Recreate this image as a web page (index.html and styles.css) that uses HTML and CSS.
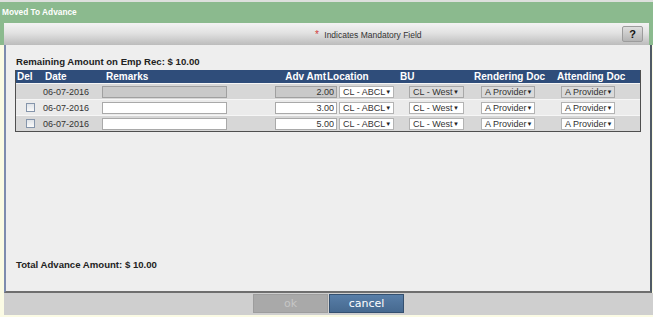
FILE: index.html
```html
<!DOCTYPE html>
<html lang="en">
<head>
    <meta charset="UTF-8">
    <meta name="viewport" content="width=device-width, initial-scale=1.0">
    <title>Moved To Advance</title>
    <link rel="stylesheet" href="styles.css">
</head>
<body>
    <div class="dialog">
        <div class="titlebar">Moved To Advance</div>

        <div class="toolbar-frame">
            <div class="toolbar">
                <span class="note"><span class="req">*</span> Indicates Mandatory Field</span>
                <button class="help">?</button>
            </div>
        </div>

        <div class="content">
            <div class="summary">Remaining Amount on Emp Rec: $ 10.00</div>

            <div class="grid">
                <div class="grid-head">
                    <div>Del</div>
                    <div>Date</div>
                    <div>Remarks</div>
                    <div>Adv Amt</div>
                    <div>Location</div>
                    <div>BU</div>
                    <div>Rendering Doc</div>
                    <div>Attending Doc</div>
                </div>

                <div class="grid-row dark locked">
                    <div></div>
                    <div class="date">06-07-2016</div>
                    <div><input class="remarks" type="text" disabled></div>
                    <div><input class="amt" type="text" value="2.00" disabled></div>
                    <div><span class="select loc">CL - ABCL<i>▼</i></span></div>
                    <div><span class="select bu off">CL - West<i>▼</i></span></div>
                    <div><span class="select doc off">A Provider<i>▼</i></span></div>
                    <div><span class="select doc off">A Provider<i>▼</i></span></div>
                </div>

                <div class="grid-row light">
                    <div><input class="del" type="checkbox"></div>
                    <div class="date">06-07-2016</div>
                    <div><input class="remarks" type="text"></div>
                    <div><input class="amt" type="text" value="3.00"></div>
                    <div><span class="select loc">CL - ABCL<i>▼</i></span></div>
                    <div><span class="select bu">CL - West<i>▼</i></span></div>
                    <div><span class="select doc">A Provider<i>▼</i></span></div>
                    <div><span class="select doc">A Provider<i>▼</i></span></div>
                </div>

                <div class="grid-row dark">
                    <div><input class="del" type="checkbox"></div>
                    <div class="date">06-07-2016</div>
                    <div><input class="remarks" type="text"></div>
                    <div><input class="amt" type="text" value="5.00"></div>
                    <div><span class="select loc">CL - ABCL<i>▼</i></span></div>
                    <div><span class="select bu">CL - West<i>▼</i></span></div>
                    <div><span class="select doc">A Provider<i>▼</i></span></div>
                    <div><span class="select doc">A Provider<i>▼</i></span></div>
                </div>
            </div>

            <div class="total">Total Advance Amount: $ 10.00</div>
        </div>

        <div class="footer">
            <button class="btn ok" disabled>ok</button>
            <button class="btn cancel">cancel</button>
        </div>
    </div>
</body>
</html>
```

FILE: styles.css
```css
body {
    margin: 0;
    padding: 0;
    background-color: #fbfbe4;
    font-family: "Liberation Sans", Arial, sans-serif;
    color: #333;
}
.dialog {
    width: 653px;
    height: 317px;
    overflow: hidden;
}
.titlebar {
    height: 21px;
    border-top: 2px solid #dde0dd;
    background-color: #8bba8e;
    color: white;
    font-weight: bold;
    font-size: 8.3px;
    line-height: 21px;
    padding-left: 2px;
}
.toolbar-frame {
    background-color: #8bba8e;
    padding: 0 4px;
}
.toolbar {
    height: 22px;
    display: flex;
    align-items: center;
    background: linear-gradient(#f3f3f3, #e2e2e2 45%, #bcbcbc);
}
.note {
    margin-left: 311px;
    font-size: 8.5px;
    color: #333;
}
.req {
    color: #d23b3b;
    font-size: 10px;
    margin-right: 3px;
}
.help {
    margin-left: auto;
    margin-right: 6px;
    width: 21px;
    height: 16px;
    padding: 0;
    border: 1px solid #9c9c9c;
    border-radius: 2px;
    background: linear-gradient(#dedede, #b4b4b4);
    font-family: "Liberation Sans", Arial, sans-serif;
    font-weight: bold;
    font-size: 11px;
    color: #111;
}
.content {
    box-sizing: border-box;
    margin-left: 4px;
    width: 648px;
    height: 248px;
    display: flex;
    flex-direction: column;
    background-color: #eeeeee;
    border-left: 2px solid #7e8cae;
    border-right: 2px solid #505a66;
    border-bottom: 2px solid #6e6e6e;
}
.summary {
    margin: 11px 0 0 10px;
    font-size: 9.6px;
    font-weight: bold;
    line-height: 12px;
    color: #222;
}
.grid {
    margin: 2px 0 0 9px;
    width: 626px;
    box-sizing: border-box;
    border: 1px solid #4f4f4f;
    border-top: none;
}
.grid-head {
    display: grid;
    grid-template-columns: 26px 61px 169px 55px 70px 74px 83px 86px;
    height: 13px;
    background-color: #2f4d7a;
    color: white;
    font-weight: bold;
    font-size: 10px;
    line-height: 13px;
    white-space: nowrap;
}
.grid-head div {
    padding-left: 3px;
}
.grid-head div:nth-child(1) {
    padding-left: 1px;
}
.grid-head div:nth-child(4) {
    padding: 0 1px 0 0;
    text-align: right;
}
.grid-head div:nth-child(5) {
    padding-left: 0;
}
.grid-row {
    display: grid;
    grid-template-columns: 24px 60px 172px 66px 67px 72px 80px 83px;
    height: 15px;
    align-items: center;
    border-top: 1px solid #f6f6f6;
    font-size: 9px;
}
.grid-row > div {
    display: flex;
    align-items: center;
}
.dark {
    background-color: #d7d7d7;
}
.light {
    background-color: #ebebeb;
}
.date {
    padding-left: 3px;
    color: #333;
}
.del {
    appearance: none;
    box-sizing: border-box;
    width: 9px;
    height: 9px;
    margin: 0 0 0 10px;
    border: 1px solid #8595ab;
    background: linear-gradient(#dfe3e8, #fafafa);
}
input[type="text"] {
    box-sizing: border-box;
    height: 12px;
    margin: 0;
    padding: 0 2px;
    border: 1px solid #a9a9a9;
    background-color: white;
    font-family: "Liberation Sans", Arial, sans-serif;
    font-size: 9px;
    color: #333;
}
input[type="text"]:disabled {
    background-color: #c9c9c9;
    border-color: #a0a0a0;
}
.remarks {
    margin-left: 2px !important;
    width: 125px;
}
.amt {
    margin-left: 3px !important;
    width: 62px;
    text-align: right;
}
.select {
    box-sizing: border-box;
    display: flex;
    justify-content: space-between;
    align-items: center;
    height: 12px;
    padding: 0 4px 0 3px;
    border: 1px solid #b3b3b3;
    background-color: white;
    color: #333;
    font-size: 9px;
    white-space: nowrap;
}
.select i {
    font-style: normal;
    font-size: 6px;
    color: #222;
}
.select.off {
    background-color: #dadada;
    border-color: #a8a8a8;
}
.loc {
    margin-left: 1px;
    width: 55px;
}
.bu {
    margin-left: 4px;
    width: 55px;
}
.doc {
    margin-left: 4px;
    width: 54px;
}
.total {
    margin: auto 0 20px 10px;
    font-size: 9.6px;
    font-weight: bold;
    line-height: 12px;
    color: #222;
}
.footer {
    margin-left: 4px;
    height: 22px;
    box-sizing: border-box;
    padding-top: 1px;
    display: flex;
    justify-content: center;
    gap: 1px;
    background-color: #cfcfcf;
}
.btn {
    width: 75px;
    height: 19px;
    padding: 0;
    font-family: "DejaVu Sans", Verdana, sans-serif;
    font-size: 11px;
    cursor: pointer;
}
.ok {
    background-color: #a9a9a9;
    border: 1px solid #9d9d9d;
    color: #c6c6c6;
}
.cancel {
    background: linear-gradient(#587ea8, #46698f);
    border: 1px solid #34506f;
    color: white;
}
```
